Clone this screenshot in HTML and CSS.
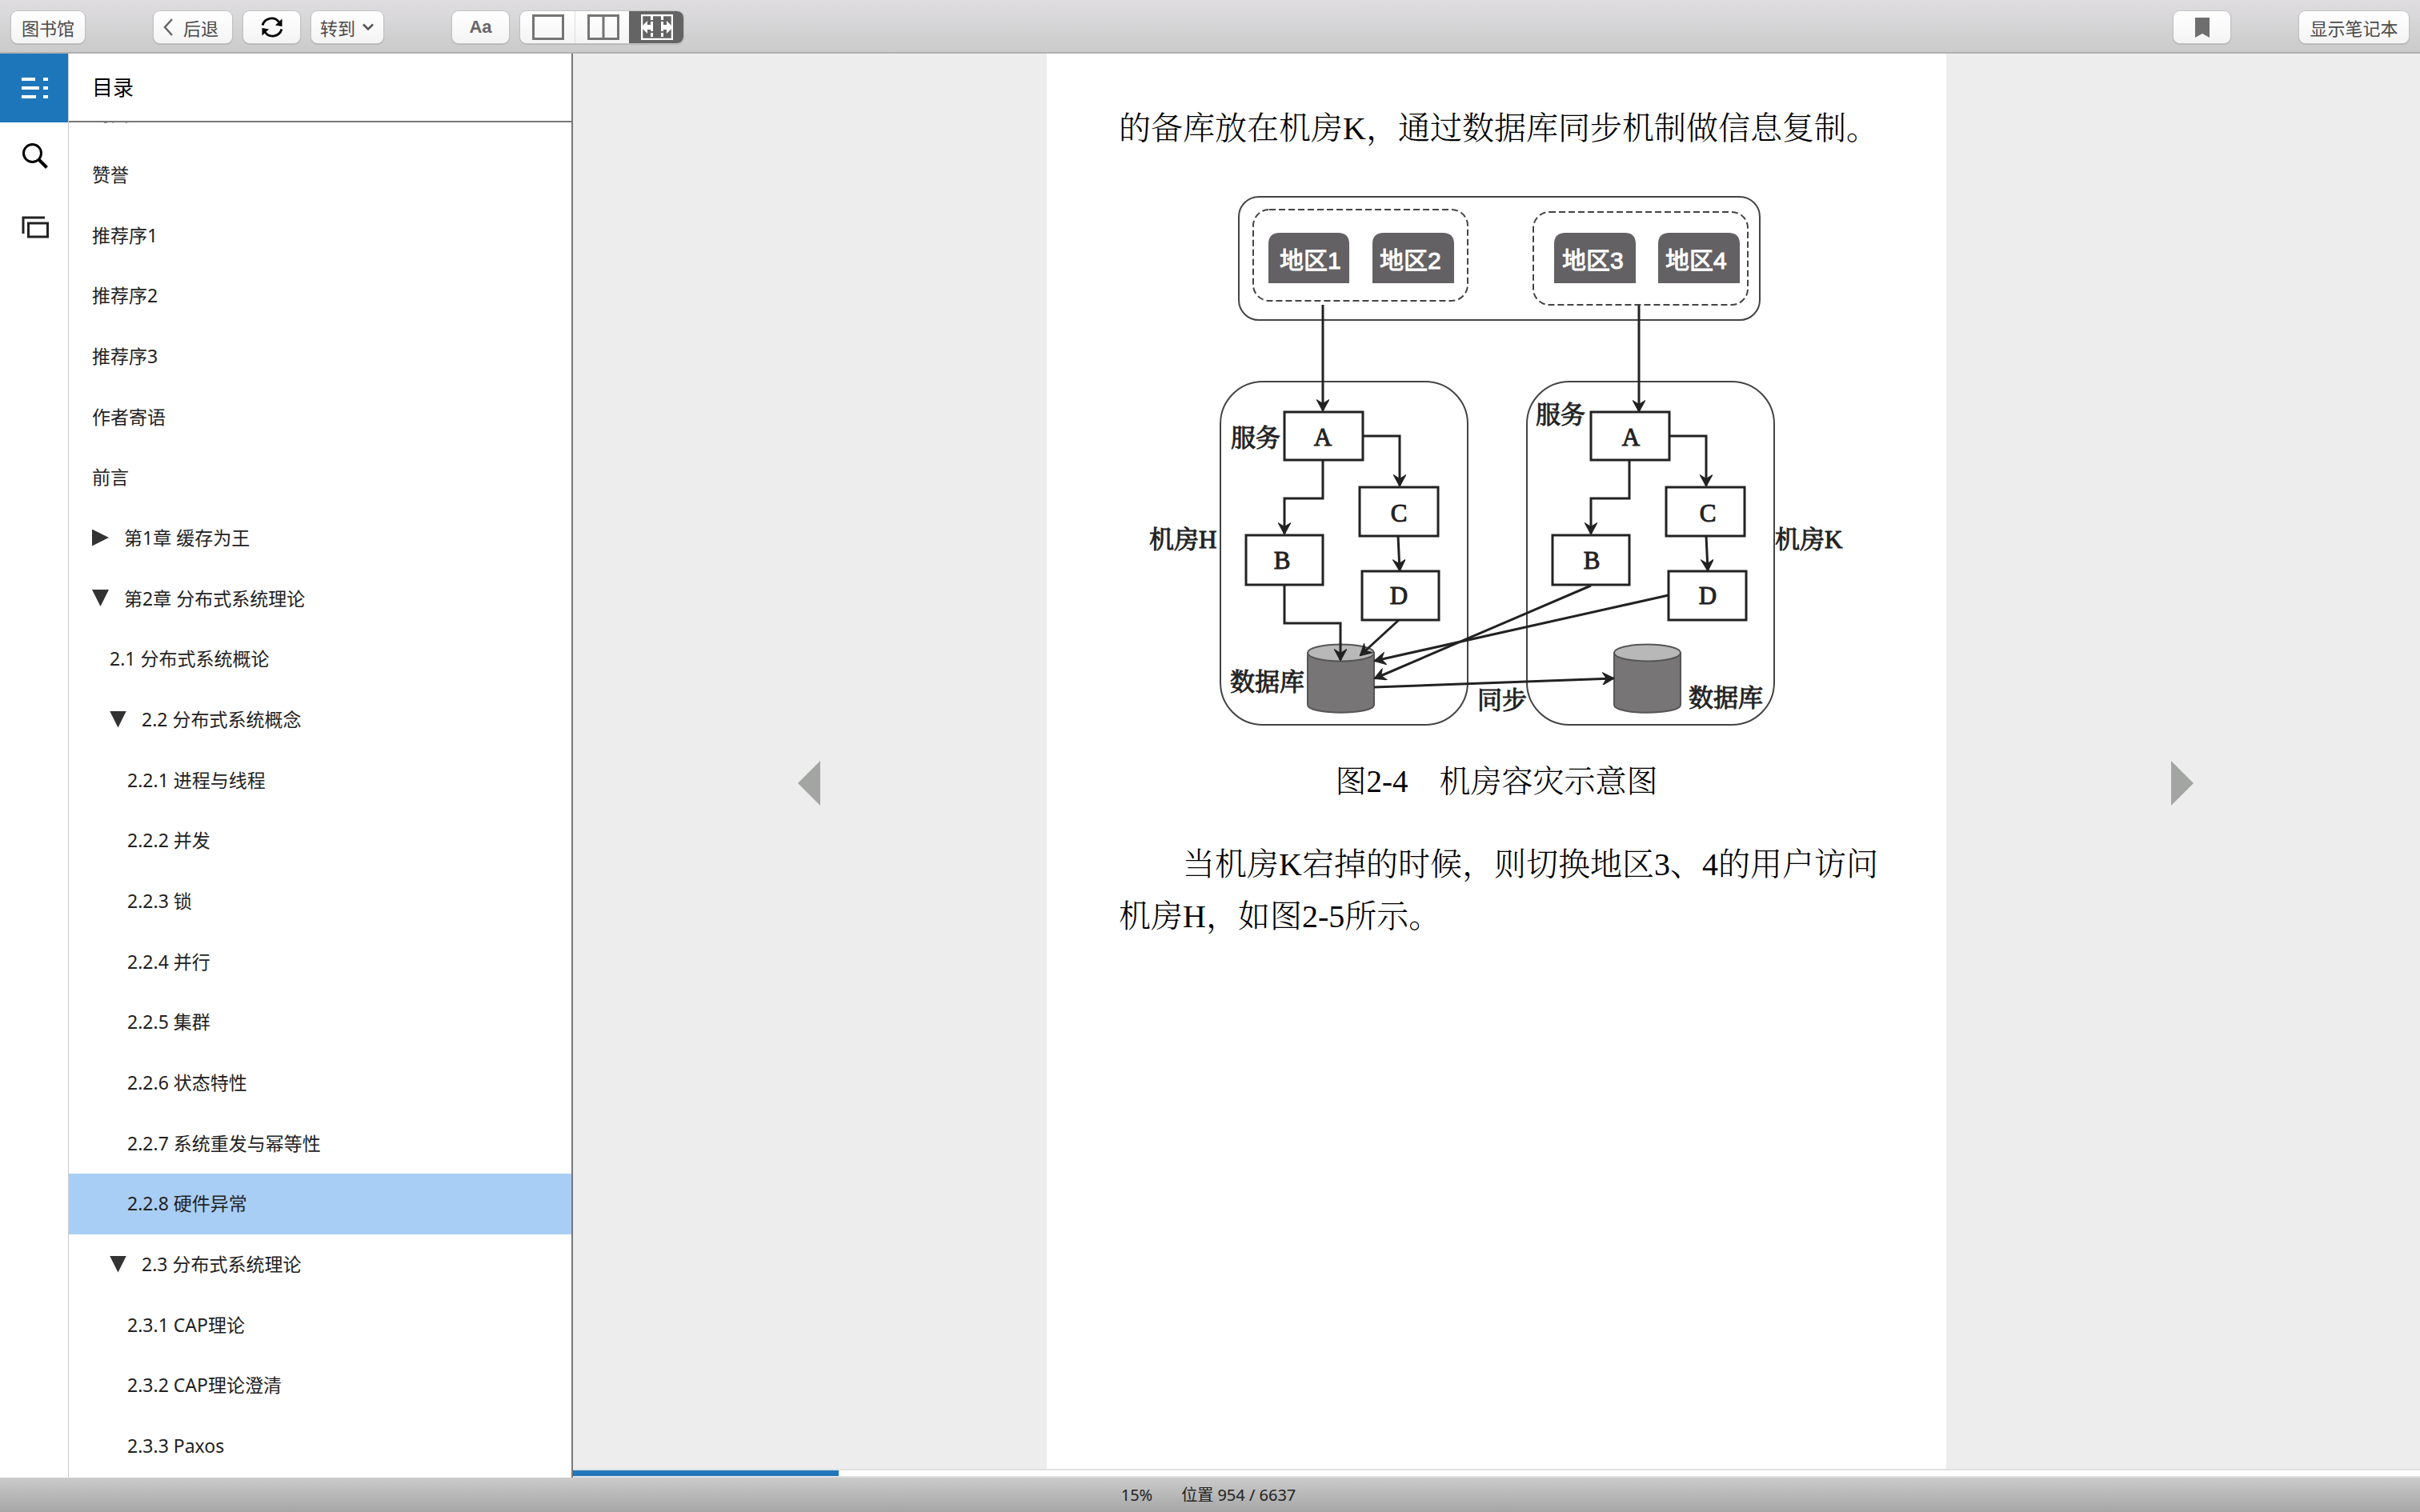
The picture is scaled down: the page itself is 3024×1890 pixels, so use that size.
FILE: index.html
```html
<!DOCTYPE html>
<html lang="zh-CN">
<head>
<meta charset="utf-8">
<title>阅读器</title>
<link rel="stylesheet" href="styles.css">
</head>
<body>
<header class="toolbar">
  <button class="btn btn-library" type="button">图书馆</button>
  <div class="group">
    <button class="btn btn-back" type="button">
      <svg width="14" height="24" viewBox="0 0 14 24" aria-hidden="true"><path d="M12 2 3 12l9 10" fill="none" stroke="#666" stroke-width="2.5"/></svg>
      后退
    </button>
    <button class="btn btn-icon" type="button" aria-label="同步">
      <svg width="28" height="28" viewBox="0 0 28 28" aria-hidden="true">
        <path d="M2 11.500C5 2 17 0 22.500 7.500M26 16.500C23 26 11 28 5.500 20.500" fill="none" stroke="#000" stroke-width="2.800"/>
        <path d="M26.500 3.500V13L18 11.500zM1.500 24.500V15l8.500 1.500z" fill="#000"/>
      </svg>
    </button>
    <button class="btn btn-goto" type="button">
      转到
      <svg width="16" height="12" viewBox="0 0 16 12" aria-hidden="true"><path d="M2 2.500l6 6 6-6" fill="none" stroke="#555" stroke-width="2.500"/></svg>
    </button>
  </div>
  <div class="group">
    <button class="btn btn-icon btn-font" type="button">Aa</button>
    <div class="segments">
      <button class="segment" type="button" aria-label="单栏">
        <svg width="40" height="32" viewBox="0 0 40 32" aria-hidden="true"><path d="M1.500 1.500h37v29h-37z" fill="none" stroke="#737573" stroke-width="3"/></svg>
      </button>
      <button class="segment" type="button" aria-label="双栏">
        <svg width="40" height="32" viewBox="0 0 40 32" aria-hidden="true"><path d="M1.500 1.500h37v29h-37zM20 2v28" fill="none" stroke="#737573" stroke-width="3"/></svg>
      </button>
      <button class="segment segment-on" type="button" aria-label="自动分栏" aria-pressed="true">
        <svg width="40" height="32" viewBox="0 0 40 32" aria-hidden="true">
          <path d="M1 1h38v30H1z" fill="none" stroke="#fff" stroke-width="2.500"/>
          <path d="M13.500 2v28M26.500 2v28" stroke="#fff" stroke-width="3" stroke-dasharray="5 2"/>
          <path d="M0 16 8 8v5h7v6H8v5zM40 16l-8-8v5h-7v6h7v5z" fill="#fff"/>
        </svg>
      </button>
    </div>
  </div>
  <div class="group group-end">
    <button class="btn btn-icon" type="button" aria-label="书签">
      <svg width="18" height="25" viewBox="0 0 18 25" aria-hidden="true"><path d="M0 0h18v25l-9-5-9 5z" fill="#6e6e6e"/></svg>
    </button>
  </div>
  <button class="btn btn-notes" type="button">显示笔记本</button>
</header>

<main class="workspace">
  <nav class="rail" aria-label="侧栏">
    <button class="rail-btn rail-on" type="button" aria-label="目录">
      <svg width="34" height="28" viewBox="0 0 34 28" aria-hidden="true"><path d="M0 3h17M27 3h6M0 14h22M27 14h6M0 25h18M27 25h6" stroke="#fff" stroke-width="4"/></svg>
    </button>
    <button class="rail-btn" type="button" aria-label="搜索">
      <svg width="34" height="34" viewBox="0 0 34 34" aria-hidden="true"><circle cx="13.500" cy="13.500" r="11" fill="none" stroke="#000" stroke-width="3"/><path d="M21 21l10.500 10.500" stroke="#000" stroke-width="4"/></svg>
    </button>
    <button class="rail-btn" type="button" aria-label="卡片">
      <svg width="34" height="28" viewBox="0 0 34 28" aria-hidden="true"><path d="M29 2H2v20" fill="none" stroke="#222" stroke-width="3"/><path d="M8.500 9h24v17h-24z" fill="none" stroke="#222" stroke-width="3"/></svg>
    </button>
  </nav>

  <aside class="toc">
    <h1 class="toc-title">目录</h1>
    <div class="toc-scroll">
      <ul class="toc-list">
        <li><a class="row" href="#">封面</a></li>
        <li><a class="row" href="#">赞誉</a></li>
        <li><a class="row" href="#">推荐序1</a></li>
        <li><a class="row" href="#">推荐序2</a></li>
        <li><a class="row" href="#">推荐序3</a></li>
        <li><a class="row" href="#">作者寄语</a></li>
        <li><a class="row" href="#">前言</a></li>
        <li><a class="row" href="#"><span class="mark closed"></span>第1章 缓存为王</a></li>
        <li><a class="row" href="#"><span class="mark open"></span>第2章 分布式系统理论</a></li>
        <li><a class="row level-1" href="#">2.1 分布式系统概论</a></li>
        <li><a class="row level-1" href="#"><span class="mark open"></span>2.2 分布式系统概念</a></li>
        <li><a class="row level-2" href="#">2.2.1 进程与线程</a></li>
        <li><a class="row level-2" href="#">2.2.2 并发</a></li>
        <li><a class="row level-2" href="#">2.2.3 锁</a></li>
        <li><a class="row level-2" href="#">2.2.4 并行</a></li>
        <li><a class="row level-2" href="#">2.2.5 集群</a></li>
        <li><a class="row level-2" href="#">2.2.6 状态特性</a></li>
        <li><a class="row level-2" href="#">2.2.7 系统重发与幂等性</a></li>
        <li><a class="row level-2 current" href="#" aria-current="true">2.2.8 硬件异常</a></li>
        <li><a class="row level-1" href="#"><span class="mark open"></span>2.3 分布式系统理论</a></li>
        <li><a class="row level-2" href="#">2.3.1 CAP理论</a></li>
        <li><a class="row level-2" href="#">2.3.2 CAP理论澄清</a></li>
        <li><a class="row level-2" href="#">2.3.3 Paxos</a></li>
      </ul>
    </div>
  </aside>

  <section class="reader">
    <div class="spread">
      <button class="turn" type="button" aria-label="上一页">
        <svg width="30" height="58" viewBox="0 0 30 58" aria-hidden="true"><path d="M29 1v56L1 29z" fill="#a3a5a3"/></svg>
      </button>
      <article class="page">
        <p class="text">的备库放在机房K，通过数据库同步机制做信息复制。</p>
        <figure class="figure">
          <svg class="diagram" viewBox="1430 240 880 670" role="img" aria-label="机房容灾示意图">
            <defs>
              <marker id="head" viewBox="-14 -8 16 16" markerWidth="16" markerHeight="16" markerUnits="userSpaceOnUse" refX="0" refY="0" orient="auto">
                <path d="M-12-6.500 0 0-12 6.500-8 0z" fill="#222" stroke="#222" stroke-width="2"/>
              </marker>
            </defs>
            <g class="frame">
              <rect x="1548" y="245" width="651" height="154" rx="25"/>
              <rect x="1525" y="476" width="309" height="429" rx="53"/>
              <rect x="1908" y="476" width="309" height="429" rx="53"/>
            </g>
            <g class="dashed">
              <rect x="1566" y="261" width="268" height="114" rx="20"/>
              <rect x="1916" y="264" width="268" height="116" rx="20"/>
            </g>
            <g class="region">
              <path d="M1585 353v-49q0-14 14-14h73q14 0 14 14v49z"/>
              <path d="M1715 353v-49q0-14 14-14h74q14 0 14 14v49z"/>
              <path d="M1942 353v-49q0-14 14-14h74q14 0 14 14v49z"/>
              <path d="M2072 353v-49q0-14 14-14h74q14 0 14 14v49z"/>
            </g>
            <g class="region-label">
              <text x="1599" y="335">地区1</text>
              <text x="1724" y="335">地区2</text>
              <text x="1952" y="335">地区3</text>
              <text x="2081" y="335">地区4</text>
            </g>
            <g class="cylinder">
              <path d="M1634 815v65c0 13 83 13 83 0v-65z"/>
              <ellipse cx="1675.500" cy="815" rx="41.500" ry="10.500"/>
              <path d="M2017 815v65c0 13 83 13 83 0v-65z"/>
              <ellipse cx="2058.500" cy="815" rx="41.500" ry="10.500"/>
            </g>
            <g class="box">
              <rect x="1605" y="514" width="98" height="60"/>
              <rect x="1699" y="608" width="98" height="61"/>
              <rect x="1557" y="668" width="96" height="62"/>
              <rect x="1702" y="713" width="96" height="61"/>
              <rect x="1988" y="514" width="98" height="60"/>
              <rect x="2082" y="608" width="98" height="61"/>
              <rect x="1940" y="668" width="96" height="62"/>
              <rect x="2085" y="713" width="97" height="61"/>
            </g>
            <g class="link">
              <path d="M1653 380v132"/>
              <path d="M2048 381v132"/>
              <path d="M1703 544h46v62"/>
              <path d="M1653 574v48h-48v44"/>
              <path d="M1747 669l2 43"/>
              <path d="M1605 730v48h70v46"/>
              <path d="M1748 774l-48 44"/>
              <path d="M2086 544h46v62"/>
              <path d="M2036 574v48h-48v44"/>
              <path d="M2132 669l2 43"/>
              <path d="M1988 731 1718 847"/>
              <path d="M2085 743 1718 825"/>
              <path d="M1717 858 2016 847"/>
            </g>
            <g class="label">
              <text x="1538" y="557">服务</text>
              <text x="1436" y="684">机房H</text>
              <text x="1537" y="862">数据库</text>
              <text x="1846" y="885">同步</text>
              <text x="1919" y="528">服务</text>
              <text x="2218" y="684">机房K</text>
              <text x="2110" y="882">数据库</text>
            </g>
            <g class="node">
              <text x="1653" y="556">A</text>
              <text x="1748" y="651">C</text>
              <text x="1602" y="710">B</text>
              <text x="1748" y="754">D</text>
              <text x="2038" y="556">A</text>
              <text x="2134" y="651">C</text>
              <text x="1989" y="710">B</text>
              <text x="2134" y="754">D</text>
            </g>
          </svg>
          <figcaption class="caption">图2-4　机房容灾示意图</figcaption>
        </figure>
        <p class="text indented">当机房K宕掉的时候，则切换地区3、4的用户访问机房H，如图2-5所示。</p>
      </article>
      <button class="turn" type="button" aria-label="下一页">
        <svg width="30" height="58" viewBox="0 0 30 58" aria-hidden="true"><path d="M1 1v56l28-28z" fill="#a3a5a3"/></svg>
      </button>
    </div>
    <div class="progress"><div class="progress-bar" style="width:14.4%"></div></div>
  </section>
</main>

<footer class="status">
  <span>15%</span>
  <span>位置 954 / 6637</span>
</footer>
</body>
</html>
```
FILE: styles.css
```css
* { box-sizing: border-box; }

body {
  margin: 0;
  height: 100vh;
  display: flex;
  flex-direction: column;
  overflow: hidden;
  background: #fff;
  color: #222;
  font-family: "Noto Sans", "Noto Sans CJK SC", sans-serif;
}

button {
  margin: 0;
  padding: 0;
  border: 0;
  background: none;
  font: inherit;
  color: inherit;
}

svg { display: block; flex: none; }

/* Toolbar */
.toolbar {
  flex: none;
  display: flex;
  align-items: center;
  gap: 86px;
  height: 67px;
  padding: 3px 14px 0;
  background: linear-gradient(#dfdde0, #cbcbcb);
  border-bottom: 2px solid #b0b0b0;
}

.group { display: flex; gap: 14px; }
.group-end { margin-left: auto; }

.btn {
  display: flex;
  align-items: center;
  justify-content: center;
  height: 40px;
  border-radius: 8px;
  background: linear-gradient(#fff, #f4f4f4);
  box-shadow: 0 0 1px 1px #c4c4c4, 0 1px 1px 1px #b4b4b4;
  font-family: "Noto Sans CJK SC", sans-serif;
  font-size: 22px;
  line-height: 32px;
  color: #4a4a4a;
  white-space: nowrap;
}

.btn-library { width: 92px; }
.btn-back { width: 98px; gap: 12px; padding-right: 6px; }
.btn-icon { width: 71px; }
.btn-goto { width: 90px; gap: 8px; }
.btn-notes { width: 137px; }

.btn-font {
  font-family: "Liberation Sans", sans-serif;
  font-weight: 700;
  color: #666;
}

.segments {
  display: flex;
  border-radius: 8px;
  overflow: hidden;
  background: linear-gradient(#fff, #f4f4f4);
  box-shadow: 0 0 1px 1px #c4c4c4, 0 1px 1px 1px #b4b4b4;
}

.segment {
  display: flex;
  align-items: center;
  justify-content: center;
  width: 68px;
  height: 40px;
  padding-left: 2px;
}

.segment + .segment { border-left: 1px solid #ddd; }
.segment + .segment-on { padding-left: 0; background: #646464; border-left-color: #646464; }

/* Workspace */
.workspace {
  flex: 1;
  min-height: 0;
  display: flex;
}

.rail {
  flex: none;
  width: 86px;
  border-right: 1px solid #ccc;
}

.rail-btn {
  display: flex;
  align-items: center;
  justify-content: center;
  width: 85px;
  height: 83px;
  margin-bottom: 6px;
  padding-left: 2px;
}

.rail-on { height: 86px; margin-bottom: 0; background: #1e76ba; }

.toc {
  flex: none;
  display: flex;
  flex-direction: column;
  width: 630px;
  border-right: 2px solid #777;
}

.toc-title {
  flex: none;
  margin: 0;
  padding: 0 29px;
  height: 86px;
  line-height: 84px;
  border-bottom: 2px solid #777;
  font-size: 26px;
  font-weight: 400;
  color: #000;
}

.toc-scroll {
  flex: 1;
  min-height: 0;
  display: flex;
  flex-direction: column;
  justify-content: flex-end;
  overflow: hidden;
}

.toc-list {
  flex: none;
  margin: 0;
  padding: 0 0 1px;
  list-style: none;
}

.row {
  display: flex;
  align-items: center;
  height: 76px;
  padding: 0 0 2px 29px;
  font-size: 23px;
  line-height: 32px;
  color: #222;
  text-decoration: none;
}

.toc-list li:nth-child(3n) .row { height: 75px; }
.row.level-1 { padding-left: 51px; }
.row.level-2 { padding-left: 73px; }
.current { background: #a9cef5; }

.mark {
  width: 21px;
  height: 21px;
  margin-right: 19px;
  background: #333;
}

.closed { clip-path: polygon(0 0, 100% 50%, 0 100%); }
.open { clip-path: polygon(0 0, 100% 0, 50% 100%); }

/* Reader */
.reader {
  flex: 1;
  min-width: 0;
  display: flex;
  flex-direction: column;
  background: #ededed;
}

.spread {
  flex: 1;
  min-height: 0;
  display: flex;
}

.turn {
  flex: 1;
  display: flex;
  align-items: center;
  justify-content: center;
  padding: 54px 2px 0 0;
}

.page {
  flex: none;
  width: 1124px;
  padding-top: 61px;
  background: #fff;
  font-family: "Liberation Serif", "Noto Serif CJK SC", "Noto Sans CJK SC", serif;
  font-size: 40px;
  font-weight: 300;
  line-height: 65px;
  color: #000;
}

.text { margin: 0; padding: 0 80px 0 90px; }
.indented { text-indent: 80px; }

.figure {
  margin: 48px 0 39px;
  text-align: center;
}

.caption { font-size: 39px; }

.diagram {
  width: 880px;
  max-width: 100%;
  margin: 0 auto 33px;
}

.frame rect { fill: none; stroke: #444; stroke-width: 2; }
.dashed rect { fill: none; stroke: #444; stroke-width: 2; stroke-dasharray: 8 4; }
.region path { fill: #636163; }
.region-label { fill: #fff; stroke: #fff; stroke-width: 1; font-family: "Liberation Sans", "Noto Sans CJK SC", sans-serif; font-size: 30px; font-weight: 400; }
.cylinder path { fill: #777576; stroke: #555; stroke-width: 2; }
.cylinder ellipse { fill: #b8b8b8; stroke: #555; stroke-width: 2; }
.box rect { fill: #fff; stroke: #222; stroke-width: 3; }
.link path { fill: none; stroke: #222; stroke-width: 3; marker-end: url(#head); }
.label { fill: #222; stroke: #222; stroke-width: 1; font-size: 31px; font-weight: 400; }
.node { fill: #222; stroke: #222; stroke-width: 1; font-size: 31px; font-weight: 400; text-anchor: middle; }

.progress {
  flex: none;
  height: 11px;
  border-top: 2px solid #e0e0e0;
  border-bottom: 2px solid #e0e0e0;
  background: #fff;
}

.progress-bar { height: 7px; background: #2276bb; }

/* Status bar */
.status {
  flex: none;
  display: flex;
  align-items: center;
  justify-content: center;
  gap: 36px;
  height: 43px;
  padding-right: 4px;
  background: linear-gradient(#cbcbcb, #a6a6a6);
  font-size: 20px;
  line-height: 32px;
}
```
